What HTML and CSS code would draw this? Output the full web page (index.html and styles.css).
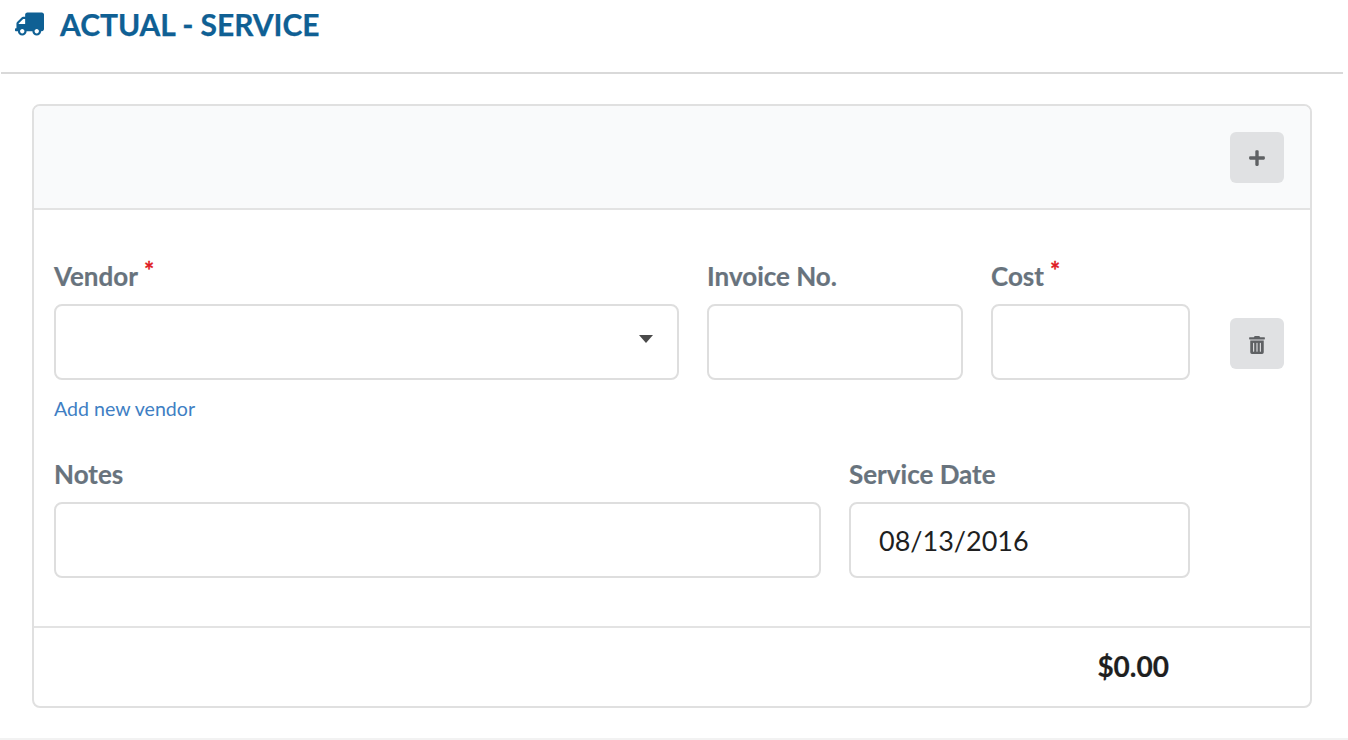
FILE: index.html
```html
<!DOCTYPE html>
<html lang="en">
<head>
<meta charset="utf-8">
<title>Actual - Service</title>
<link rel="stylesheet" href="styles.css">
</head>
<body>
<header class="page-head">
  <svg class="truck" viewBox="0 0 640 512" aria-hidden="true"><path transform="matrix(-1 0 0 1 640 0)" d="M624 352h-16V243.900c0-12.700-5.100-24.900-14.100-33.900L494 110.100c-9-9-21.200-14.100-33.900-14.100H416V48c0-26.500-21.500-48-48-48H48C21.500 0 0 21.500 0 48v320c0 26.500 21.500 48 48 48h16c0 53 43 96 96 96s96-43 96-96h128c0 53 43 96 96 96s96-43 96-96h48c8.800 0 16-7.200 16-16v-32c0-8.800-7.200-16-16-16zM160 464c-26.500 0-48-21.500-48-48s21.500-48 48-48 48 21.500 48 48-21.500 48-48 48zm320 0c-26.500 0-48-21.500-48-48s21.500-48 48-48 48 21.500 48 48-21.500 48-48 48zm80-208H416V144h44.100l99.900 99.900V256z"/></svg>
  <h1 class="title">ACTUAL - SERVICE</h1>
</header>
<section class="card">
  <div class="card-head">
    <button class="icon-btn" type="button" aria-label="Add">
      <svg class="plus" viewBox="0 0 448 512" aria-hidden="true"><path d="M416 208H272V64c0-17.670-14.330-32-32-32h-32c-17.670 0-32 14.330-32 32v144H32c-17.670 0-32 14.330-32 32v32c0 17.670 14.330 32 32 32h144v144c0 17.670 14.330 32 32 32h32c17.670 0 32-14.330 32-32V304h144c17.670 0 32-14.330 32-32v-32c0-17.670-14.330-32-32-32z"/></svg>
    </button>
  </div>
  <div class="card-body">
    <div class="fields">
      <div class="row row-a">
        <div class="field vendor">
          <label class="label">Vendor<span class="req">*</span></label>
          <div class="input select"><span class="caret"></span></div>
          <a class="link" href="#">Add new vendor</a>
        </div>
        <div class="field invoice">
          <label class="label">Invoice No.</label>
          <div class="input"></div>
        </div>
        <div class="field cost">
          <label class="label">Cost<span class="req">*</span></label>
          <div class="input"></div>
        </div>
      </div>
      <div class="row row-b">
        <div class="field notes">
          <label class="label">Notes</label>
          <div class="input"></div>
        </div>
        <div class="field date">
          <label class="label">Service Date</label>
          <div class="input value">08/13/2016</div>
        </div>
      </div>
    </div>
    <button class="icon-btn trash-btn" type="button" aria-label="Delete">
      <svg class="trash" viewBox="0 0 448 512" aria-hidden="true"><path d="M32 464a48 48 0 0 0 48 48h288a48 48 0 0 0 48-48V128H32zm272-256a16 16 0 0 1 32 0v224a16 16 0 0 1-32 0zm-96 0a16 16 0 0 1 32 0v224a16 16 0 0 1-32 0zm-96 0a16 16 0 0 1 32 0v224a16 16 0 0 1-32 0zM432 32H312l-9.400-18.700A24 24 0 0 0 281.100 0H166.800a23.720 23.720 0 0 0-21.400 13.300L136 32H16A16 16 0 0 0 0 48v32a16 16 0 0 0 16 16h416a16 16 0 0 0 16-16V48a16 16 0 0 0-16-16z"/></svg>
    </button>
  </div>
  <div class="card-foot"><span class="total">$0.00</span></div>
</section>
<div class="page-end"></div>
</body>
</html>
```
FILE: styles.css
```css
* { box-sizing: border-box; }
html, body { margin: 0; padding: 0; }
body {
  width: 1348px;
  height: 740px;
  overflow: hidden;
  background: #fff;
  font-family: Lato, "Open Sans", sans-serif;
  position: relative;
}
.page-head {
  display: flex;
  align-items: center;
  gap: 16px;
  height: 74px;
  margin: 0 5px 0 1px;
  padding: 0 0 24px 14px;
  border-bottom: 2px solid #d9d9d9;
}
.truck { width: 29px; height: 24px; fill: #0f6094; flex: none; }
.title {
  margin: 0;
  font-size: 30px;
  line-height: 48px;
  font-weight: 700;
  color: #0f6094;
  letter-spacing: -0.05px;
  -webkit-text-stroke: 0.25px #0f6094;
}
.card {
  margin: 30px 0 0 32px;
  width: 1280px;
  height: 604px;
  border: 2px solid #e0e0e0;
  border-radius: 8px;
  overflow: hidden;
}
.card-head {
  height: 104px;
  padding: 26px 26px 0 0;
  display: flex;
  justify-content: flex-end;
  align-items: flex-start;
  background: #f9fafb;
  border-bottom: 2px solid #e3e3e3;
}
.icon-btn {
  width: 54px;
  height: 51px;
  padding: 0;
  border: 0;
  border-radius: 6px;
  background: #e0e1e3;
  display: flex;
  align-items: center;
  justify-content: center;
}
.plus { width: 16px; height: 18px; fill: #5f6164; }
.trash { width: 16px; height: 18px; fill: #5f6164; }
.card-body {
  height: 418px;
  padding: 50px 26px 0 20px;
  display: flex;
  justify-content: space-between;
  align-items: flex-start;
  border-bottom: 2px solid #e3e3e3;
}
.trash-btn { margin-top: 58px; padding-top: 3px; }
.fields { width: 1136px; }
.row { display: flex; gap: 28px; }
.row-a { height: 198px; }
.field { flex: none; }
.vendor { width: 625px; }
.invoice { width: 256px; }
.cost { width: 199px; }
.notes { width: 767px; }
.date { width: 341px; }
.label {
  display: block;
  height: 44px;
  font-size: 26px;
  line-height: 32px;
  font-weight: 700;
  color: #68737d;
  -webkit-text-stroke: 0.2px #68737d;
}
.req {
  color: #e01b24;
  -webkit-text-stroke: 0.3px #e01b24;
  font-size: 24px;
  margin-left: 6px;
  position: relative;
  top: -6px;
}
.input {
  height: 76px;
  border: 2px solid #dedede;
  border-radius: 8px;
  background: #fff;
}
.select { display: flex; align-items: center; justify-content: flex-end; padding: 0 24px 6px 0; }
.caret {
  width: 0;
  height: 0;
  border-left: 7.500px solid transparent;
  border-right: 7.500px solid transparent;
  border-top: 8px solid #4a4a4a;
}
.value {
  padding: 1px 28px 0;
  font-size: 27px;
  line-height: 72px;
  color: #1f1f1f;
}
.link {
  display: block;
  margin-top: 16px;
  font-size: 19.600px;
  line-height: 26px;
  color: #3f7fc4;
  text-decoration: none;
}
.card-foot {
  height: 76px;
  padding: 0 141px 0 0;
  display: flex;
  align-items: center;
  justify-content: flex-end;
}
.total {
  font-size: 28px;
  font-weight: 700;
  color: #1f1f1f;
  -webkit-text-stroke: 0.2px #1f1f1f;
}
.page-end {
  position: absolute;
  left: 0;
  right: 0;
  top: 738px;
  height: 2px;
  background: #f2f2f2;
}
```
